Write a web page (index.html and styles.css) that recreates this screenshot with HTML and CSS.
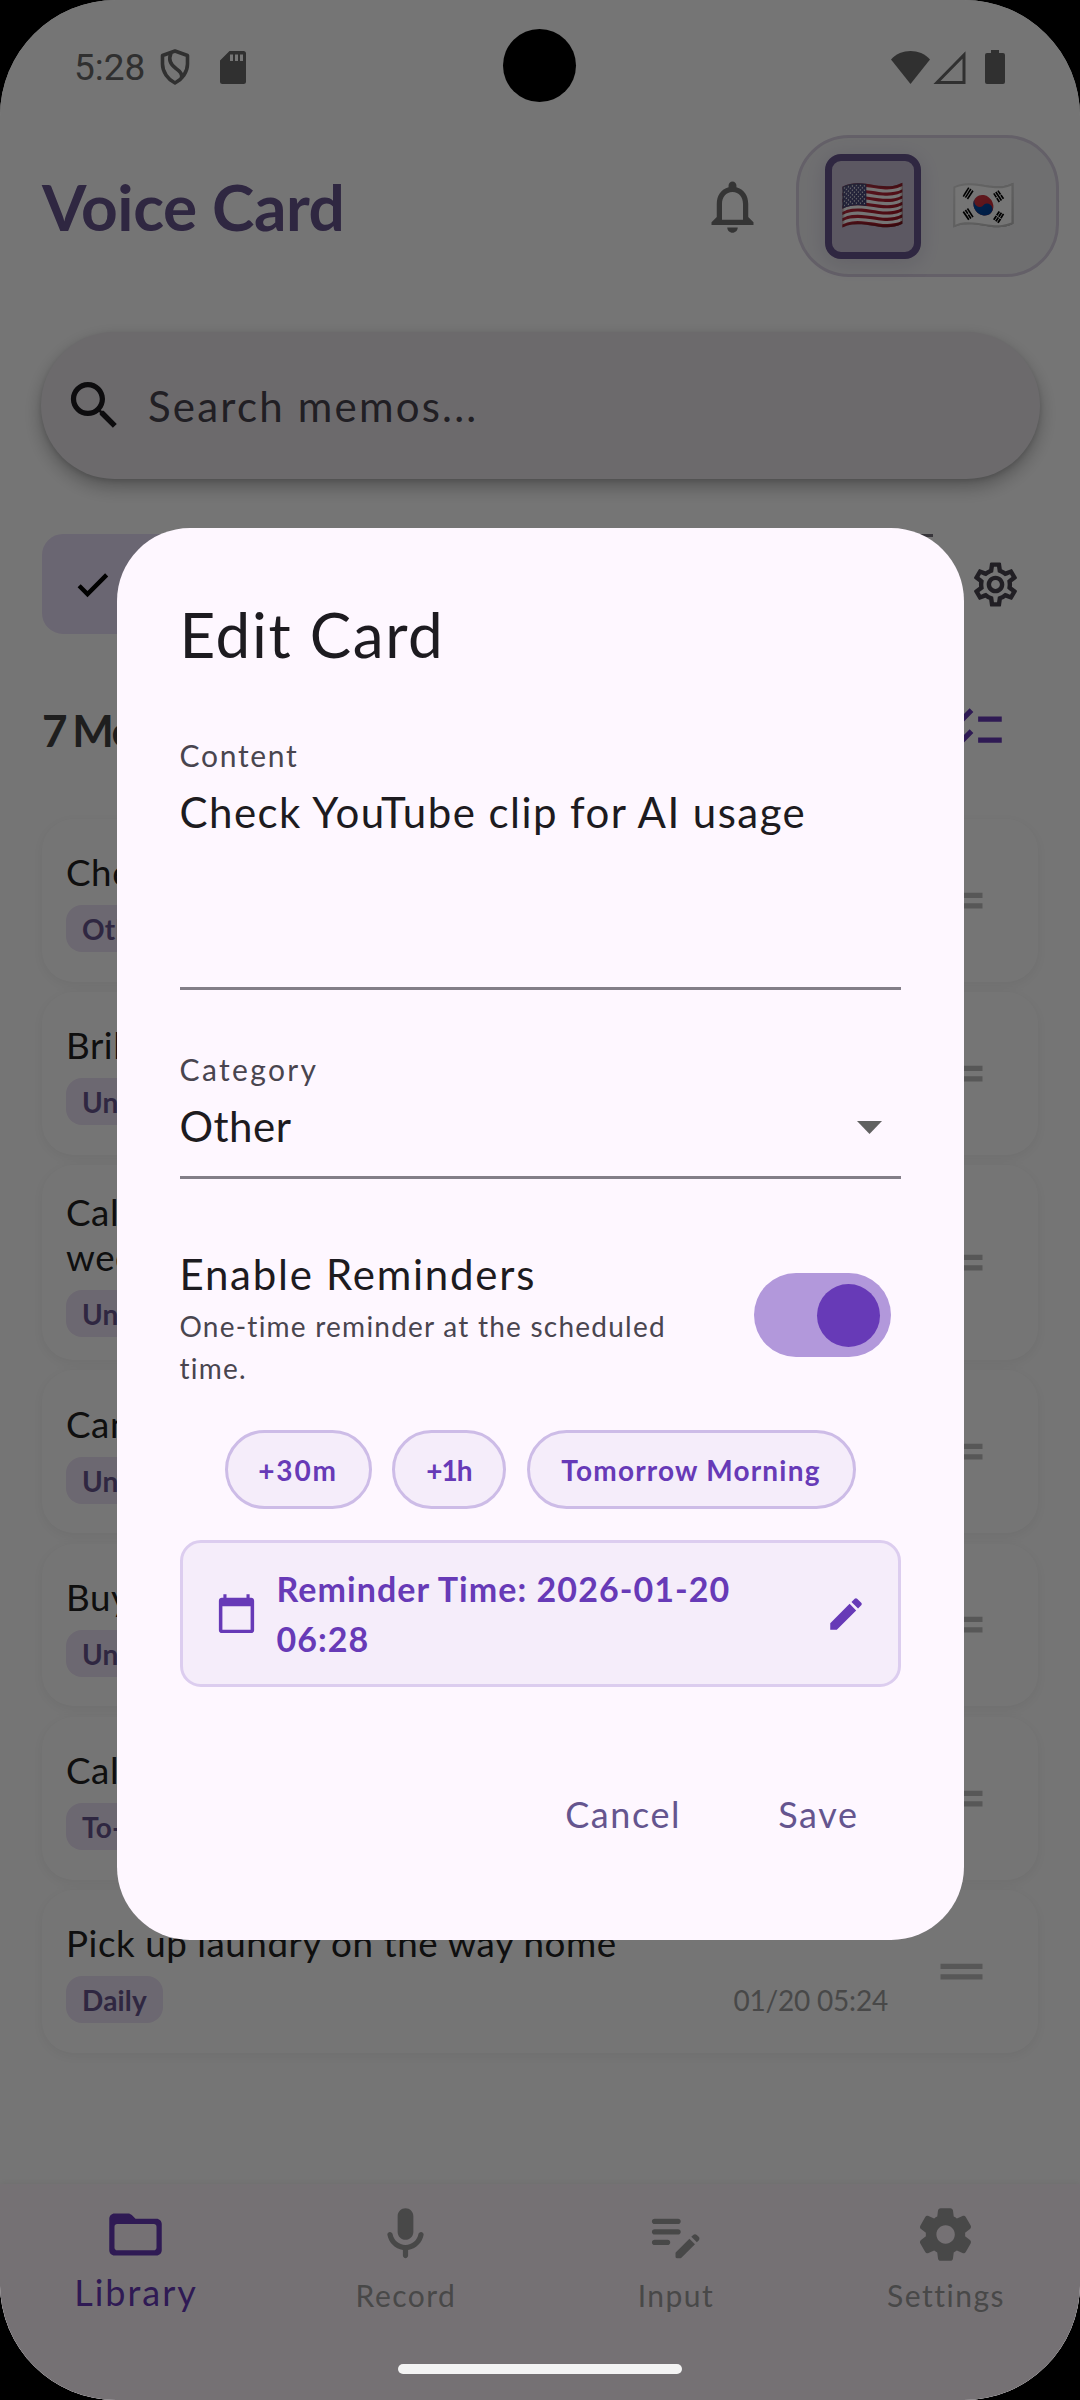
FILE: index.html
```html
<!DOCTYPE html>
<html lang="en">
<head>
    <meta charset="UTF-8">
    <meta name="viewport" content="width=device-width, initial-scale=1.0">
    <title>Voice Card</title>
    <link rel="stylesheet" href="styles.css">
</head>
<body>
<div class="screen">
    <div class="status-bar">
        <span class="clock">5:28</span>
        <svg class="shield" width="30" height="36" viewBox="0 0 30 36" fill="none" stroke="#696969" stroke-width="3.6" stroke-linejoin="round">
            <path d="M15 2 2.500 6.500V15C2.500 23 8 30.500 15 34 22 30.500 27.500 23 27.500 15V6.500Z"/>
            <path d="M11 4C8 11 11 16 16 19.500 20.500 22.500 22.500 25.500 21.500 29"/>
        </svg>
        <svg class="sdcard" width="26" height="33" viewBox="0 0 26 33" fill="#696969">
            <path fill-rule="evenodd" d="M9.500 0H23.500Q26 0 26 2.500V30.500Q26 33 23.500 33H2.500Q0 33 0 30.500V9.500ZM10 3.500V10H13V3.500ZM15 3.500V10H18V3.500ZM20 3.500V10H23V3.500Z"/>
        </svg>
        <svg class="wifi" width="39" height="33" viewBox="0 0 39 33" fill="#696969">
            <path d="M19.500 33 0 8.500C10-2.800 29-2.800 39 8.500Z"/>
        </svg>
        <svg class="signal" width="33" height="33" viewBox="0 0 33 33" fill="none" stroke="#696969" stroke-width="3">
            <path d="M31 4V31.500H4Z"/>
        </svg>
        <svg class="battery" width="20" height="34" viewBox="0 0 20 34" fill="#696969">
            <path d="M6 0H14V3H18Q20 3 20 5V32Q20 34 18 34H2Q0 34 0 32V5Q0 3 2 3H6Z"/>
        </svg>
    </div>

    <div class="header">
        <h1>Voice Card</h1>
        <svg class="icon bell" viewBox="0 0 24 24"><path d="M12 22c1.100 0 2-.9 2-2h-4c0 1.100.9 2 2 2zm6-6v-5c0-3.070-1.630-5.640-4.500-6.320V4c0-.83-.67-1.500-1.500-1.500s-1.500.67-1.500 1.500v.68C7.640 5.360 6 7.920 6 11v5l-2 2v1h16v-1l-2-2zm-2 1H8v-6c0-2.480 1.510-4.500 4-4.500s4 2.020 4 4.500v6z"/></svg>
        <div class="languages">
            <span class="flag active">🇺🇸</span>
            <span class="flag">🇰🇷</span>
        </div>
    </div>

    <div class="search">
        <svg class="icon" viewBox="0 0 24 24"><path d="M15.500 14h-.79l-.28-.27C15.410 12.590 16 11.110 16 9.500 16 5.910 13.090 3 9.500 3S3 5.910 3 9.500 5.910 16 9.500 16c1.610 0 3.090-.59 4.230-1.570l.27.28v.79l5 4.990L20.490 19l-4.990-5zm-6 0C7.010 14 5 11.990 5 9.500S7.010 5 9.500 5 14 7.010 14 9.500 11.990 14 9.500 14z"/></svg>
        <span>Search memos...</span>
    </div>

    <div class="filters">
        <div class="chips">
            <span class="chip selected">
                <svg width="44" height="44" viewBox="0 0 24 24"><path d="M9 15.800 5.300 12.100 3.600 13.800 9 19.200 20.300 7.900 18.600 6.200z"/></svg>
                All
            </span>
            <span class="chip">Personal</span>
            <span class="chip">Daily</span>
            <span class="chip"></span>
        </div>
        <svg class="gear" viewBox="0 0 24 24"><path d="M19.430 12.980c.04-.32.07-.64.07-.98 0-.34-.03-.66-.07-.98l2.110-1.650c.19-.15.24-.42.12-.64l-2-3.460c-.09-.16-.26-.25-.44-.25-.06 0-.12.01-.17.03l-2.490 1c-.52-.4-1.080-.73-1.690-.98l-.38-2.650C14.460 2.180 14.250 2 14 2h-4c-.25 0-.46.18-.49.42l-.38 2.650c-.61.25-1.170.59-1.690.98l-2.490-1c-.06-.02-.12-.03-.18-.03-.17 0-.34.09-.43.25l-2 3.460c-.13.22-.07.49.12.64l2.110 1.650c-.04.32-.07.65-.07.98 0 .33.03.66.07.98l-2.110 1.650c-.19.15-.24.42-.12.64l2 3.460c.09.16.26.25.44.25.06 0 .12-.01.17-.03l2.490-1c.52.4 1.080.73 1.690.98l.38 2.650c.03.24.24.42.49.42h4c.25 0 .46-.18.49-.42l.38-2.650c.61-.25 1.170-.59 1.690-.98l2.490 1c.06.02.12.03.18.03.17 0 .34-.09.43-.25l2-3.460c.12-.22.07-.49-.12-.64l-2.110-1.650zm-1.980-1.710c.04.31.05.52.05.73 0 .21-.02.43-.05.73l-.14 1.130.89.7 1.080.84-.7 1.210-1.270-.51-1.040-.42-.9.68c-.43.32-.84.56-1.250.73l-1.060.43-.16 1.130-.2 1.350h-1.400l-.19-1.350-.16-1.130-1.060-.43c-.43-.18-.83-.41-1.230-.71l-.91-.7-1.060.43-1.270.51-.7-1.210 1.080-.84.89-.7-.14-1.130c-.03-.31-.05-.54-.05-.74s.02-.43.05-.73l.14-1.130-.89-.7-1.080-.84.7-1.210 1.270.51 1.040.42.9-.68c.43-.32.84-.56 1.250-.73l1.060-.43.16-1.130.2-1.350h1.390l.19 1.350.16 1.130 1.060.43c.43.18.83.41 1.230.71l.91.7 1.060-.43 1.270-.51.7 1.210-1.070.85-.89.7.14 1.130zM12 8c-2.210 0-4 1.790-4 4s1.790 4 4 4 4-1.790 4-4-1.790-4-4-4zm0 6c-1.100 0-2-.9-2-2s.9-2 2-2 2 .9 2 2-.9 2-2 2z"/></svg>
    </div>

    <div class="count-row">
        <h2>7 Memos</h2>
        <svg class="icon" viewBox="0 0 24 24"><path d="M22 7h-9v2h9V7zm0 8h-9v2h9v-2zM5.540 11 2 7.460l1.410-1.410 2.120 2.120 4.240-4.240 1.410 1.410L5.540 11zm0 8L2 15.460l1.410-1.410 2.120 2.120 4.240-4.240 1.410 1.410L5.540 19z"/></svg>
    </div>

    <div class="cards">
        <div class="card">
            <div class="card-body">
                <div class="card-title">Check YouTube clip for AI usage</div>
                <div class="card-meta"><span class="tag">Other</span><span class="date">01/20 05:27</span></div>
            </div>
            <svg class="icon" viewBox="0 0 24 24"><path d="M20 9H4v2h16V9zM4 15h16v-2H4v2z"/></svg>
        </div>
        <div class="card">
            <div class="card-body">
                <div class="card-title">Brilliant idea</div>
                <div class="card-meta"><span class="tag">Uncategorized</span><span class="date">01/20 05:26</span></div>
            </div>
            <svg class="icon" viewBox="0 0 24 24"><path d="M20 9H4v2h16V9zM4 15h16v-2H4v2z"/></svg>
        </div>
        <div class="card tall">
            <div class="card-body">
                <div class="card-title">Call the team about the plan for next<br>week</div>
                <div class="card-meta"><span class="tag">Uncategorized</span><span class="date">01/20 05:26</span></div>
            </div>
            <svg class="icon" viewBox="0 0 24 24"><path d="M20 9H4v2h16V9zM4 15h16v-2H4v2z"/></svg>
        </div>
        <div class="card">
            <div class="card-body">
                <div class="card-title">Cancel subscription</div>
                <div class="card-meta"><span class="tag">Uncategorized</span><span class="date">01/20 05:25</span></div>
            </div>
            <svg class="icon" viewBox="0 0 24 24"><path d="M20 9H4v2h16V9zM4 15h16v-2H4v2z"/></svg>
        </div>
        <div class="card">
            <div class="card-body">
                <div class="card-title">Buy milk</div>
                <div class="card-meta"><span class="tag">Uncategorized</span><span class="date">01/20 05:25</span></div>
            </div>
            <svg class="icon" viewBox="0 0 24 24"><path d="M20 9H4v2h16V9zM4 15h16v-2H4v2z"/></svg>
        </div>
        <div class="card">
            <div class="card-body">
                <div class="card-title">Call the dentist</div>
                <div class="card-meta"><span class="tag">To-do</span><span class="date">01/20 05:24</span></div>
            </div>
            <svg class="icon" viewBox="0 0 24 24"><path d="M20 9H4v2h16V9zM4 15h16v-2H4v2z"/></svg>
        </div>
        <div class="card">
            <div class="card-body">
                <div class="card-title">Pick up laundry on the way home</div>
                <div class="card-meta"><span class="tag">Daily</span><span class="date">01/20 05:24</span></div>
            </div>
            <svg class="icon" viewBox="0 0 24 24"><path d="M20 9H4v2h16V9zM4 15h16v-2H4v2z"/></svg>
        </div>
    </div>

    <div class="bottom-nav">
        <div class="nav-item active">
            <svg class="icon" viewBox="0 0 24 24"><path d="M20 6h-8l-1.410-1.410C10.210 4.210 9.700 4 9.170 4H4c-1.100 0-1.990.9-1.990 2L2 18c0 1.100.9 2 2 2h16c1.100 0 2-.9 2-2V8c0-1.100-.9-2-2-2zm-1 12H5c-.55 0-1-.45-1-1V9c0-.55.45-1 1-1h14c.55 0 1 .45 1 1v8c0 .55-.45 1-1 1z"/></svg>
            <span>Library</span>
        </div>
        <div class="nav-item">
            <svg class="icon" viewBox="0 0 24 24"><path d="M12 14c1.660 0 3-1.340 3-3V5c0-1.660-1.340-3-3-3S9 3.340 9 5v6c0 1.660 1.340 3 3 3zm5.910-3c-.49 0-.9.36-.98.85C16.520 14.200 14.470 16 12 16s-4.520-1.800-4.930-4.150c-.08-.49-.49-.85-.98-.85-.61 0-1.090.54-1 1.140.49 3 2.890 5.350 5.910 5.780V20c0 .55.45 1 1 1s1-.45 1-1v-2.080c3.020-.43 5.420-2.780 5.910-5.780.1-.6-.39-1.140-1-1.140z"/></svg>
            <span>Record</span>
        </div>
        <div class="nav-item">
            <svg class="icon" viewBox="0 0 24 24"><path d="M14 11c0 .55-.45 1-1 1H4c-.55 0-1-.45-1-1s.45-1 1-1h9c.55 0 1 .45 1 1zM3 7c0 .55.45 1 1 1h9c.55 0 1-.45 1-1s-.45-1-1-1H4c-.55 0-1 .45-1 1zm7 8c0-.55-.45-1-1-1H4c-.55 0-1 .45-1 1s.45 1 1 1h5c.55 0 1-.45 1-1zm8.010-2.130.71-.71c.39-.39 1.020-.39 1.410 0l.71.71c.39.39.39 1.020 0 1.410l-.71.71-2.120-2.120zm-.71.71-5.160 5.160c-.09.09-.14.21-.14.35v1.410c0 .28.22.5.5.5h1.410c.13 0 .26-.05.35-.15l5.160-5.160-2.120-2.110z"/></svg>
            <span>Input</span>
        </div>
        <div class="nav-item">
            <svg class="icon" viewBox="0 0 24 24"><path d="M19.500 12c0-.23-.01-.45-.03-.68l1.860-1.410c.4-.3.51-.86.26-1.300l-1.870-3.230c-.25-.44-.79-.62-1.250-.42l-2.150.91c-.37-.26-.76-.49-1.170-.68l-.29-2.310c-.06-.5-.49-.88-.99-.88h-3.730c-.51 0-.94.38-1 .88l-.29 2.310c-.41.19-.8.42-1.170.68l-2.150-.91c-.46-.2-1-.02-1.250.42L2.410 8.620c-.25.44-.14.99.26 1.300l1.860 1.410c-.02.22-.03.44-.03.67s.01.45.03.68l-1.860 1.410c-.4.3-.51.86-.26 1.300l1.870 3.230c.25.44.79.62 1.250.42l2.150-.91c.37.26.76.49 1.170.68l.29 2.310c.06.5.49.88.99.88h3.730c.5 0 .93-.38.99-.88l.29-2.310c.41-.19.8-.42 1.170-.68l2.150.91c.46.2 1 .02 1.250-.42l1.870-3.230c.25-.44.14-.99-.26-1.300l-1.860-1.410c.03-.23.04-.45.04-.68zm-7.460 3.500c-1.930 0-3.500-1.570-3.500-3.500s1.570-3.500 3.500-3.500 3.500 1.570 3.500 3.500-1.570 3.500-3.500 3.500z"/></svg>
            <span>Settings</span>
        </div>
    </div>

    <div class="scrim">
        <div class="dialog">
            <h3>Edit Card</h3>
            <div class="field content-field">
                <label>Content</label>
                <div class="value">Check YouTube clip for AI usage</div>
            </div>
            <div class="field category-field">
                <label>Category</label>
                <div class="value">Other
                    <svg width="25" height="13" viewBox="0 0 25 13"><path d="M0 0h25L12.500 13z"/></svg>
                </div>
            </div>
            <div class="reminder-toggle">
                <div>
                    <div class="toggle-title">Enable Reminders</div>
                    <div class="toggle-text">One-time reminder at the scheduled<br>time.</div>
                </div>
                <div class="switch"></div>
            </div>
            <div class="quick">
                <span class="quick-chip minutes">+30m</span>
                <span class="quick-chip hour">+1h</span>
                <span class="quick-chip morning">Tomorrow Morning</span>
            </div>
            <div class="time-box">
                <svg class="calendar" viewBox="0 0 24 24"><path d="M19.500 4H18.700V2.200h-1.600V4H6.900V2.200H5.300V4H4.500C3.670 4 3 4.670 3 5.500v15c0 .83.67 1.500 1.500 1.500h15c.83 0 1.500-.67 1.500-1.500v-15c0-.83-.67-1.500-1.500-1.500zM19.200 20.300H4.800V8.300h14.400z"/></svg>
                <span>Reminder Time: 2026-01-20<br>06:28</span>
                <svg class="pencil" viewBox="0 0 24 24"><path d="M3 17.250V21h3.750L17.810 9.940l-3.750-3.750L3 17.250zM20.710 7.040c.39-.39.39-1.020 0-1.410l-2.340-2.340c-.39-.39-1.020-.39-1.410 0l-1.830 1.830 3.750 3.750 1.830-1.830z"/></svg>
            </div>
            <div class="actions">
                <span>Cancel</span>
                <span>Save</span>
            </div>
        </div>
    </div>

    <div class="camera"></div>
    <div class="home-bar"></div>
</div>
</body>
</html>
```
FILE: styles.css
```css
* {
    box-sizing: border-box;
}
body {
    margin: 0;
    background: #000;
    font-family: Lato, sans-serif;
}
h1, h2, h3 {
    margin: 0;
}
svg {
    display: block;
    flex: none;
}
.screen {
    position: relative;
    width: 1080px;
    height: 2400px;
    background: #fff;
    border-radius: 116px;
    overflow: hidden;
    display: flex;
    flex-direction: column;
}
.icon {
    width: 63px;
    height: 63px;
}

/* status bar */
.status-bar {
    height: 134px;
    padding: 0 75px 0 74px;
    display: flex;
    align-items: center;
}
.clock {
    font: 37px Roboto, sans-serif;
    color: #696969;
    width: 86px;
}
.sdcard {
    margin-left: 30px;
}
.wifi {
    margin-left: auto;
}
.signal {
    margin-left: 3px;
}
.battery {
    margin-left: 19px;
}

/* header */
.header {
    height: 143px;
    padding: 1px 21px 0 42px;
    display: flex;
    align-items: center;
}
h1 {
    flex: 1;
    font-size: 64px;
    font-weight: 700;
    line-height: 76px;
    padding-top: 2px;
    letter-spacing: -0.400px;
    color: #68558f;
}
.bell {
    fill: #757575;
    margin-right: 32px;
}
.languages {
    width: 263px;
    height: 142px;
    border: 3px solid #d9d1e2;
    border-radius: 53px;
    background: #f2f2f5;
    display: flex;
    align-items: center;
    padding-left: 26px;
    gap: 15px;
}
.flag {
    width: 96px;
    height: 105px;
    display: flex;
    align-items: center;
    justify-content: center;
    font: 52px/60px "Noto Color Emoji", sans-serif;
}
.flag.active {
    border: 7px solid #68558f;
    border-radius: 16px;
    background: #c8c0d5;
    box-shadow: 0 4px 21px rgba(104, 85, 143, 0.2);
}

/* search */
.search {
    margin: 55px 40px 0 41px;
    height: 147px;
    border-radius: 74px;
    background: #ebe7ec;
    box-shadow: 0 8px 18px rgba(0, 0, 0, 0.28), 0 2px 5px rgba(0, 0, 0, 0.12);
    display: flex;
    align-items: center;
    padding-left: 22px;
    gap: 22px;
    font-size: 42px;
    letter-spacing: 2.200px;
    color: #49454f;
}
.search .icon {
    fill: #1d1b20;
}

/* filters */
.filters {
    margin: 55px 58px 0 42px;
    height: 100px;
    display: flex;
    align-items: center;
    justify-content: space-between;
}
.chips {
    width: 891px;
    height: 100px;
    display: flex;
    gap: 21px;
    overflow: hidden;
}
.chip {
    flex: none;
    min-width: 250px;
    border: 3px solid #79747e;
    border-radius: 21px;
    display: flex;
    align-items: center;
    padding: 0 26px;
    gap: 21px;
    font-size: 36px;
    color: #49454f;
}
.chip.selected {
    border-color: #e8def8;
    background: #e8def8;
    color: #1d192b;
}
.gear {
    width: 53px;
    height: 53px;
    fill: #49454f;
}

/* memo count */
.count-row {
    margin: 64px 73px 0 42px;
    height: 63px;
    display: flex;
    align-items: center;
    justify-content: space-between;
}
h2 {
    font-size: 44px;
    font-weight: 700;
    letter-spacing: -1.500px;
    word-spacing: -3px;
    color: #424242;
}
.count-row .icon {
    fill: #673ab7;
}

/* cards */
.cards {
    margin: 58px 42px 0 42px;
    display: flex;
    flex-direction: column;
    gap: 10.400px;
}
.card {
    height: 162.800px;
    border-radius: 32px;
    background: #fff;
    box-shadow: 0 3px 14px rgba(0, 0, 0, 0.06);
    display: flex;
    align-items: center;
    padding: 0 45px 0 24px;
}
.card.tall {
    height: 194.600px;
}
.card-body {
    flex: 1;
    padding-top: 2px;
}
.card-title {
    font-size: 36.750px;
    line-height: 44.500px;
    letter-spacing: 0.550px;
    color: #212121;
}
.card-meta {
    margin-top: 10px;
    display: flex;
    align-items: center;
    justify-content: space-between;
}
.tag {
    height: 47px;
    padding: 0 16px;
    border-radius: 16px;
    background: #ece2f6;
    font-size: 28px;
    font-weight: 700;
    line-height: 48px;
    letter-spacing: 0.200px;
    color: #68558f;
}
.date {
    margin-right: 42px;
    font-size: 28px;
    line-height: 48px;
    letter-spacing: -0.200px;
    color: #9e9e9e;
}
.card .icon {
    fill: #bdbdbd;
}

/* bottom nav */
.bottom-nav {
    margin-top: auto;
    height: 216px;
    background: #fff6fd;
    box-shadow: 0 -2px 6px rgba(0, 0, 0, 0.05);
    display: flex;
}
.nav-item {
    flex: 1;
    padding-top: 19px;
    display: flex;
    flex-direction: column;
    align-items: center;
    font-size: 30px;
    line-height: 38px;
    letter-spacing: 1.500px;
    color: #9e9e9e;
    fill: #9e9e9e;
}
.nav-item span {
    margin-top: 10px;
    padding-left: 2px;
}
.nav-item.active {
    font-size: 36px;
    letter-spacing: 2px;
    color: #673ab7;
    fill: #673ab7;
}
.nav-item.active span {
    margin-top: 7px;
}

/* dialog */
.scrim {
    position: absolute;
    inset: 0;
    background: rgba(0, 0, 0, 0.54);
}
.dialog {
    margin: 528px auto 0;
    width: 847px;
    height: 1412px;
    padding: 64px 63px 0 63px;
    border-radius: 73px;
    background: #fef7ff;
    color: #1d1b20;
}
h3 {
    font-size: 62px;
    font-weight: 400;
    line-height: 84px;
    letter-spacing: 1.600px;
}
.field {
    margin-top: 63px;
    border-bottom: 3px solid #837e88;
}
.field label {
    display: block;
    font-size: 30px;
    line-height: 32px;
    letter-spacing: 1.700px;
    color: #49454f;
}
.value {
    margin-top: 16px;
    font-size: 42px;
    line-height: 50px;
    letter-spacing: 1.450px;
}
.content-field {
    height: 251px;
}
.category-field {
    height: 126px;
}
.category-field label {
    letter-spacing: 2.350px;
}
.category-field .value {
    display: flex;
    align-items: center;
    justify-content: space-between;
    padding-right: 19px;
    letter-spacing: 0.500px;
}
.value svg {
    margin-top: 3px;
    fill: #616161;
}
.reminder-toggle {
    margin-top: 70px;
    padding-right: 10px;
    display: flex;
    align-items: center;
    justify-content: space-between;
}
.toggle-title {
    font-size: 42px;
    line-height: 50px;
    letter-spacing: 1.750px;
}
.toggle-text {
    margin-top: 6px;
    font-size: 28px;
    line-height: 42px;
    letter-spacing: 1.230px;
    color: #49454f;
}
.switch {
    width: 137px;
    height: 84px;
    margin-bottom: 8px;
    padding: 10.500px;
    border-radius: 42px;
    background: #b298db;
    display: flex;
    justify-content: flex-end;
}
.switch::after {
    content: '';
    width: 63px;
    height: 63px;
    border-radius: 50%;
    background: #673ab7;
}
.quick {
    margin-top: 41px;
    display: flex;
    justify-content: center;
    gap: 20.500px;
}
.quick-chip {
    height: 79px;
    border: 3px solid #cdbce7;
    border-radius: 40px;
    background: #f5edfa;
    font-size: 28px;
    font-weight: 700;
    line-height: 75px;
    text-align: center;
    letter-spacing: 1.200px;
    color: #673ab7;
}
.minutes {
    width: 147px;
    letter-spacing: 1.800px;
}
.hour {
    width: 114px;
    letter-spacing: -1px;
}
.morning {
    width: 329px;
}
.time-box {
    margin-top: 31px;
    height: 147px;
    padding: 0 31px 0 30px;
    border: 3px solid #dccdef;
    border-radius: 21px;
    background: #f5edfa;
    display: flex;
    align-items: center;
    font-size: 34px;
    font-weight: 700;
    line-height: 49.500px;
    letter-spacing: 1.050px;
    color: #673ab7;
    fill: #673ab7;
}
.time-box span {
    flex: 1;
    margin-left: 17px;
}
.calendar {
    width: 47px;
    height: 47px;
}
.pencil {
    width: 42px;
    height: 42px;
}
.actions {
    margin-top: 105px;
    padding-right: 42px;
    display: flex;
    justify-content: flex-end;
    gap: 97px;
    font-size: 36px;
    line-height: 45px;
    letter-spacing: 1.600px;
    color: #65558f;
}

/* device overlays */
.camera {
    position: absolute;
    top: 29px;
    left: 503px;
    width: 73px;
    height: 73px;
    border-radius: 50%;
    background: #000;
}
.home-bar {
    position: absolute;
    top: 2364px;
    left: 398px;
    width: 284px;
    height: 10px;
    border-radius: 5px;
    background: #f3f3f3;
}
```
